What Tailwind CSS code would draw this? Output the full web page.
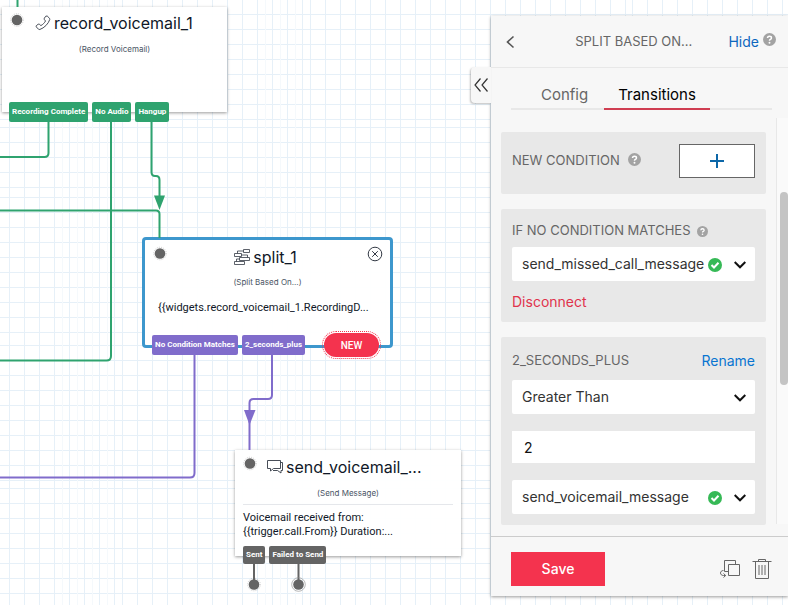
<!DOCTYPE html>
<html lang="en">
<head>
<meta charset="utf-8">
<meta name="viewport" content="width=device-width, initial-scale=1">
<title>Flow editor</title>
<script src="https://cdn.jsdelivr.net/npm/@tailwindcss/browser@4"></script>
</head>
<body class="bg-white font-[Inter,sans-serif] text-gray-900">
<div class="relative flex h-screen justify-end overflow-hidden pt-4 pb-[9px]">

  <!-- Canvas -->
  <main class="absolute inset-0 overflow-hidden">
    <svg class="absolute inset-0 h-full w-full" aria-hidden="true">
      <defs>
        <pattern id="cols" width="15" height="15" patternUnits="userSpaceOnUse" x="9"><path d="M.5 0V15" stroke="#e6f0f8"/></pattern>
        <pattern id="cols2" width="15" height="15" patternUnits="userSpaceOnUse" x="2"><path d="M.5 0V15" stroke="#e6f0f8"/></pattern>
        <pattern id="cols3" width="15" height="15" patternUnits="userSpaceOnUse" x="10"><path d="M.5 0V15" stroke="#e6f0f8"/></pattern>
        <pattern id="rows" width="15" height="15" patternUnits="userSpaceOnUse" y="14"><path d="M0 .5H15" stroke="#e6f0f8"/></pattern>
        <pattern id="rows2" width="15" height="15" patternUnits="userSpaceOnUse" y="7"><path d="M0 .5H15" stroke="#e6f0f8"/></pattern>
        <pattern id="rows3" width="15" height="15" patternUnits="userSpaceOnUse" y="2"><path d="M0 .5H15" stroke="#e6f0f8"/></pattern>
        <pattern id="rows4" width="15" height="15" patternUnits="userSpaceOnUse" y="0"><path d="M0 .5H15" stroke="#e6f0f8"/></pattern>
        <pattern id="rows5" width="15" height="15" patternUnits="userSpaceOnUse" y="8"><path d="M0 .5H15" stroke="#e6f0f8"/></pattern>
      </defs>
      <rect width="118" height="100%" fill="url(#cols)"/>
      <rect x="118" width="188" height="100%" fill="url(#cols2)"/>
      <rect x="306" width="324" height="100%" fill="url(#cols3)"/>
      <rect x="630" width="100%" height="100%" fill="url(#cols2)"/>
      <rect width="100%" height="123" fill="url(#rows)"/>
      <rect y="123" width="100%" height="69" fill="url(#rows2)"/>
      <rect y="192" width="100%" height="150" fill="url(#rows3)"/>
      <rect y="342" width="100%" height="142" fill="url(#rows4)"/>
      <rect y="484" width="100%" height="100%" fill="url(#rows5)"/>
      <path d="M62.500 0V605M77.500 0V605M92.500 0V605M107.500 0V605M265.500 0V605M280.500 0V605M295.500 0V605" stroke="#f5f9fc"/>
    </svg>

    <!-- record_voicemail_1 -->
    <section class="absolute top-[7px] left-[2px] flex h-[105px] w-[225px] flex-col items-center bg-white/95 pt-1 shadow-[0_1px_3px_rgba(0,0,0,0.4)]">
      <h2 class="flex w-full items-center gap-[3px] pl-[33px] text-base leading-6">
        <svg class="h-4 w-4" viewBox="0 0 16 16" fill="none" stroke="#333a45" aria-hidden="true"><path d="M10.800 1.200 12.200 1 14.600 3.400 14.800 4.400C13.300 9 9.300 12.900 4.800 14.500L3.600 14.300 1.200 11.800 1.300 10.700 3.200 9.200 4.300 9.200 5.900 10.600C7.900 9.500 9.500 7.900 10.500 6L9.200 4.300 9.300 3.200Z" stroke-width=".9" stroke-linejoin="round"/></svg>
        <span>record_voicemail_1</span>
      </h2>
      <p class="mt-2 text-[8px] leading-3 text-gray-600">(Record Voicemail)</p>
      <div class="absolute top-[95px] left-[7px] flex gap-1 font-[Roboto,sans-serif] text-[8px] leading-5 font-bold whitespace-nowrap text-white">
        <span class="rounded-xs bg-[#2fa36f] px-[3px]">Recording Complete</span>
        <span class="rounded-xs bg-[#2fa36f] px-[3px]">No Audio</span>
        <span class="rounded-xs bg-[#2fa36f] px-[3px]">Hangup</span>
      </div>
    </section>

    <!-- split_1 -->
    <section class="absolute top-[237px] left-[142px] flex h-[111px] w-[251px] flex-col items-center rounded-sm border-[3px] border-[#3d97cd] bg-white/95 pt-[5px]">
      <h2 class="flex items-center gap-[3px] pr-1 text-base leading-6">
        <svg class="h-4 w-4" viewBox="0 0 16 16" fill="none" stroke="#333a45" aria-hidden="true"><path d="M9.500 .5H15.500V3.500H9.500ZM.5 4.500H7.500V7.500H.5ZM5.500 8.500H15.500V11.500H5.500ZM.5 12.500H10.500V15.500H.5ZM9.500 2H3.500V4.500M7.500 6H13.500V8.500M5.500 10H2.500V12.500" stroke-width=".8"/></svg>
        <span>split_1</span>
      </h2>
      <p class="mt-[7px] text-[8px] leading-3 text-gray-600">(Split Based On...)</p>
      <p class="mt-3 w-full truncate pr-4 pl-[13px] font-[Roboto,sans-serif] text-[11px] leading-4">{{widgets.record_voicemail_1.RecordingD...</p>
      <button type="button" aria-label="Remove widget" class="absolute top-[6px] right-[7px]">
        <svg class="h-4 w-4" viewBox="0 0 16 16" fill="none" stroke="#333a45" aria-hidden="true"><circle cx="8" cy="8" r="6.800"/><path d="M5.200 5.200 10.800 10.800M10.800 5.200 5.200 10.800"/></svg>
      </button>
      <div class="absolute top-[95px] left-[7px] flex gap-1 font-[Roboto,sans-serif] text-[8px] leading-5 font-bold whitespace-nowrap text-white">
        <span class="rounded-xs bg-[#806ccb] px-[3px]">No Condition Matches</span>
        <span class="rounded-xs bg-[#806ccb] px-[3px]">2_seconds_plus</span>
      </div>
      <button type="button" class="absolute top-[93px] right-[11px] h-6 w-[55px] rounded-full bg-[#f4334e] font-[Roboto,sans-serif] text-[10px] font-medium text-white outline-1 outline-offset-1 outline-[#f4334e] outline-dotted">NEW</button>
    </section>

    <!-- send_voicemail_message -->
    <section class="absolute top-[450px] left-[235px] flex h-[106px] w-[226px] flex-col items-center bg-white/95 pt-[5px] shadow-[0_1px_3px_rgba(0,0,0,0.4)]">
      <h2 class="flex w-full items-center gap-[3px] pl-8 text-base leading-6">
        <svg class="h-4 w-4" viewBox="0 0 16 16" fill="none" stroke="#333a45" aria-hidden="true"><path d="M.5 1.500H13.500V9.500H6.500L3.500 12V9.500H.5Z" stroke-width=".9"/><path d="M13.500 3.500H15.500V11.500H14V14L10.500 11.500H6" stroke-width=".9"/></svg>
        <span>send_voicemail_...</span>
      </h2>
      <p class="mt-2 text-[8px] leading-3 text-gray-600">(Send Message)</p>
      <p class="mt-[5px] w-[210px] border-t border-gray-200 pt-[6px] font-[Roboto,sans-serif] text-[11px] leading-[14px]">Voicemail received from:<br>{{trigger.call.From}} Duration:...</p>
      <div class="absolute top-[96px] left-2 flex gap-1 font-[Roboto,sans-serif] text-[8px] leading-[18px] font-bold whitespace-nowrap text-white">
        <span class="rounded-xs bg-[#646464] px-[3px]">Sent</span>
        <span class="rounded-xs bg-[#646464] px-[3px]">Failed to Send</span>
      </div>
    </section>

    <!-- Connectors -->
    <svg class="pointer-events-none absolute inset-0 h-full w-full" fill="none" stroke-width="2" aria-hidden="true">
      <g stroke="#2fa36f">
        <path d="M17.500 0V7M48.500 122V153Q48.500 157 44.500 157H0M111 122V356Q111 360.500 106.500 360.500H0M151.500 122V172Q151.500 176 155 176H156Q159.500 176 159.500 180V197M0 210.500H156Q159.500 210.500 159.500 214V238"/>
        <path d="M154 195.500H165L159.500 210Z" fill="#2fa36f" stroke="none"/>
      </g>
      <g stroke="#806ccb">
        <path d="M194.500 355V473Q194.500 477.500 190 477.500H0M272 355V395Q272 399 268 399H253.500Q249.500 399 249.500 403V450"/>
        <path d="M244 410H255.500L249.500 425Z" fill="#806ccb" stroke="none"/>
      </g>
      <path d="M254 564V584M298.500 564V584" stroke="#646464"/>
      <g fill="#646464">
        <circle cx="17" cy="20" r="5.300"/><circle cx="160" cy="253.500" r="5.300"/><circle cx="250" cy="463.500" r="5.300"/><circle cx="254" cy="584.500" r="5.300"/><circle cx="298.500" cy="584.500" r="5.300"/>
      </g>
      <g stroke="#646464" stroke-width=".5" stroke-opacity=".6" stroke-dasharray="1 1">
        <circle cx="17" cy="20" r="6.300"/><circle cx="160" cy="253.500" r="6.300"/><circle cx="250" cy="463.500" r="6.300"/><circle cx="254" cy="584.500" r="6.300"/>
      </g>
      <circle cx="298.500" cy="584.500" r="6.800" stroke="#888" stroke-width=".6"/>
    </svg>
  </main>

  <!-- Inspector -->
  <aside class="relative flex w-[297px] flex-col bg-[#f7f7f7] shadow-[0_1px_3px_rgba(0,0,0,0.4)]">
    <button type="button" aria-label="Collapse panel" class="absolute top-[51px] right-full flex h-9 w-5 items-center justify-center rounded-l bg-[#f7f7f7] shadow-[-1px_1px_2px_rgba(0,0,0,0.25)]">
      <svg class="h-4 w-4" viewBox="0 0 16 16" fill="none" stroke="#333" stroke-width="1.200" aria-hidden="true"><path d="M7.500 1.500 2 8 7.500 14.500M14.500 1.500 9 8 14.500 14.500"/></svg>
    </button>

    <header class="flex h-[52px] shrink-0 items-center border-b border-[#e8e8e8] px-3 text-sm">
      <button type="button" aria-label="Back"><svg class="h-4 w-4" viewBox="0 0 16 16" fill="none" stroke="#555" stroke-width="1.600" aria-hidden="true"><path d="M10.500 2.500 4.500 8 10.500 13.500"/></svg></button>
      <h1 class="flex-1 pl-5 text-center text-[13px] text-[#666]">SPLIT BASED ON...</h1>
      <a href="#" class="text-[#0d67be]">Hide</a>
      <svg class="mb-1 ml-1 h-[13px] w-[13px]" viewBox="0 0 12 12" aria-hidden="true"><circle cx="6" cy="6" r="6" fill="#a3a3a3"/><path d="M4.200 4.700Q4.200 3 6 3T7.800 4.500Q7.800 5.400 6.800 5.900 6 6.300 6 7.200" fill="none" stroke="#fff" stroke-width="1.400"/><circle cx="6" cy="9" r=".9" fill="#fff"/></svg>
    </header>

    <nav class="mr-4 ml-5 flex shrink-0 border-b-2 border-[#e8e8e8] pt-3 pl-4 text-[15px]" aria-label="Widget settings">
      <a href="#" class="px-[14px] pt-[5px] pb-[3px] leading-5 text-[#666]">Config</a>
      <a href="#" aria-current="page" class="-mb-[2px] ml-[2px] border-b-2 border-[#d03e52] px-[14px] pt-[5px] pb-[3px] leading-5 text-black">Transitions</a>
    </nav>

    <div class="mt-2 flex min-h-0 flex-1">
      <div class="flex min-w-0 flex-1 flex-col gap-[15px] overflow-hidden pt-[14px] pr-[10px] pl-[10px]">
        <section class="flex shrink-0 items-center rounded-xs bg-[#e8e8e8] px-[11px] pt-3 pb-4">
          <h2 class="text-[13px] text-[#666]">NEW CONDITION</h2>
          <svg class="mb-1 ml-2 h-[13px] w-[13px]" viewBox="0 0 12 12" aria-hidden="true"><circle cx="6" cy="6" r="6" fill="#a3a3a3"/><path d="M4.200 4.700Q4.200 3 6 3T7.800 4.500Q7.800 5.400 6.800 5.900 6 6.300 6 7.200" fill="none" stroke="#fff" stroke-width="1.400"/><circle cx="6" cy="9" r=".9" fill="#fff"/></svg>
          <button type="button" aria-label="Add condition" class="ml-auto flex h-[34px] w-[76px] items-center justify-center border border-[#666] bg-white">
            <svg class="h-[14px] w-[14px]" viewBox="0 0 14 14" stroke="#0d67a8" stroke-width="2" aria-hidden="true"><path d="M7 0V14M0 7H14"/></svg>
          </button>
        </section>

        <section class="shrink-0 rounded-xs bg-[#e8e8e8] px-[11px] pt-[14px] pb-[10px]">
          <div class="flex h-4 items-center">
            <label for="fallback" class="text-[13px] text-[#666]">IF NO CONDITION MATCHES</label>
            <svg class="ml-[6px] h-[11px] w-[11px]" viewBox="0 0 12 12" aria-hidden="true"><circle cx="6" cy="6" r="6" fill="#a3a3a3"/><path d="M4.200 4.700Q4.200 3 6 3T7.800 4.500Q7.800 5.400 6.800 5.900 6 6.300 6 7.200" fill="none" stroke="#fff" stroke-width="1.400"/><circle cx="6" cy="9" r=".9" fill="#fff"/></svg>
          </div>
          <div class="relative mt-2">
            <select id="fallback" class="h-[34px] w-full appearance-none rounded-xs bg-white pl-[10px] text-sm text-[#333]"><option>send_missed_call_message</option></select>
            <svg class="pointer-events-none absolute top-[11px] right-[33px] h-[14px] w-[14px]" viewBox="0 0 14 14" fill="none" stroke="#fff" stroke-width="2" aria-hidden="true"><circle cx="7" cy="7" r="7" fill="#36b956" stroke="none"/><path d="M3.500 7 6 9.500 10.500 4.800"/></svg>
            <svg class="pointer-events-none absolute top-[14px] right-[9px] h-2 w-3" viewBox="0 0 12 8" fill="none" stroke="#111" stroke-width="2" aria-hidden="true"><path d="M.7 1 6 6.300 11.300 1"/></svg>
          </div>
          <button type="button" class="mt-[11px] block text-sm text-[#e0334c]">Disconnect</button>
        </section>

        <section class="shrink-0 rounded-xs bg-[#e8e8e8] px-[11px] pt-[14px] pb-[11px]">
          <div class="flex h-5 items-center justify-between">
            <h2 class="text-[13px] text-[#666]">2_SECONDS_PLUS</h2>
            <a href="#" class="text-sm text-[#0875d1]">Rename</a>
          </div>
          <div class="relative mt-[9px]">
            <select aria-label="Comparison" class="h-[34px] w-full appearance-none rounded-xs bg-white pl-[10px] text-sm text-[#333]"><option>Greater Than</option></select>
            <svg class="pointer-events-none absolute top-[14px] right-[9px] h-2 w-3" viewBox="0 0 12 8" fill="none" stroke="#111" stroke-width="2" aria-hidden="true"><path d="M.7 1 6 6.300 11.300 1"/></svg>
          </div>
          <input type="text" aria-label="Value" value="2" class="mt-[17px] block h-8 w-full bg-white px-3 text-sm text-[#111]">
          <div class="relative mt-[17px]">
            <select aria-label="Transition to" class="h-[34px] w-full appearance-none rounded-xs bg-white pl-[10px] text-sm text-[#333]"><option>send_voicemail_message</option></select>
            <svg class="pointer-events-none absolute top-[11px] right-[33px] h-[14px] w-[14px]" viewBox="0 0 14 14" fill="none" stroke="#fff" stroke-width="2" aria-hidden="true"><circle cx="7" cy="7" r="7" fill="#36b956" stroke="none"/><path d="M3.500 7 6 9.500 10.500 4.800"/></svg>
            <svg class="pointer-events-none absolute top-[14px] right-[9px] h-2 w-3" viewBox="0 0 12 8" fill="none" stroke="#111" stroke-width="2" aria-hidden="true"><path d="M.7 1 6 6.300 11.300 1"/></svg>
          </div>
        </section>
      </div>
      <div class="mb-3 w-3 border-l border-[#e8e8e8] bg-[#fafafa] pt-[74px]" aria-hidden="true"><div class="ml-auto h-[193px] w-2 rounded-full bg-[#c4c4c4]"></div></div>
    </div>

    <footer class="flex h-[60px] shrink-0 items-center gap-3 border-t border-[#ccc] pt-1 pr-4 pl-5">
      <button type="button" class="mr-auto h-[34px] w-[94px] bg-[#f4334e] text-sm font-medium text-white">Save</button>
      <button type="button" aria-label="Duplicate"><svg class="h-5 w-5" viewBox="0 0 20 20" fill="none" stroke="#666" aria-hidden="true"><path d="M8.500 12.500H4.500V1.500H15.500V5.500M8.500 5.500H19.500V16.500H8.500ZM3.500 11.500C-.5 11.500-.5 16.500 3.500 16.500H5.500M3.500 14.500 5.700 16.500 3.500 18.500"/></svg></button>
      <button type="button" aria-label="Delete"><svg class="h-5 w-5" viewBox="0 0 20 20" fill="none" stroke="#666" aria-hidden="true"><path d="M.5 2.500H19.500M6.500 2.500V.5H13.500V2.500M3.500 2.500V19.500H16.500V2.500M7 6V16M10 6V16M13 6V16"/></svg></button>
    </footer>
  </aside>
</div>
</body>
</html>
